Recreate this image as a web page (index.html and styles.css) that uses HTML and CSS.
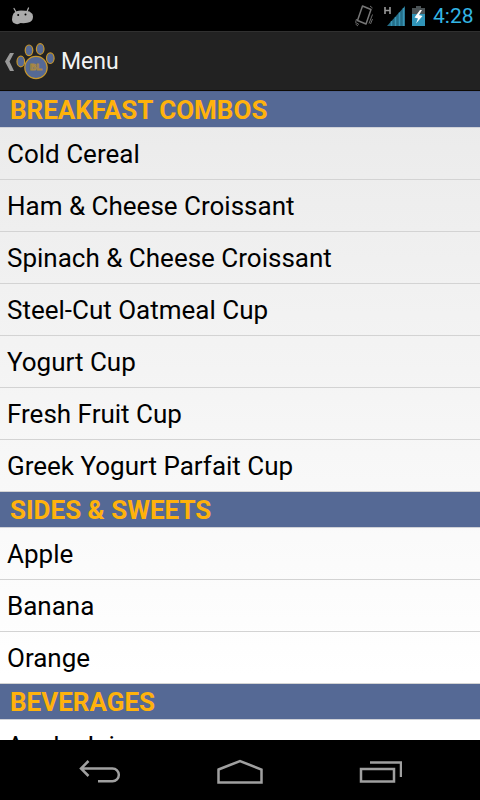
FILE: index.html
```html
<!DOCTYPE html>
<html lang="en">
<head>
<meta charset="utf-8">
<meta name="viewport" content="width=device-width, initial-scale=1">
<title>Menu</title>
<link rel="stylesheet" href="styles.css">
</head>
<body>
<div class="status">
  <svg class="status-bot" width="24" height="18" viewBox="0 0 24 18" aria-hidden="true">
    <path d="M3 1.500 5 5M17.500 1 16 4.500" stroke="#aaa" stroke-width="1.300" stroke-linecap="round"/>
    <path d="M2.500 6.500Q5 3.500 10 3.500T18.500 4.500Q21.500 6 22 9.500Q22 13.500 19 15Q16 16.500 9.500 16Q7.500 17.500 5 17Q1 16 1 12.500Q1 9 2.500 6.500Z" fill="#aaa"/>
    <circle cx="7.200" cy="8" r="1" fill="#000"/><circle cx="14.500" cy="7.500" r="1" fill="#000"/>
  </svg>
  <svg class="status-icons" width="74" height="22" viewBox="0 0 74 22" aria-hidden="true">
    <g fill="none" stroke="#777">
      <path d="M7.500 1 16 4.500 11 19 2.500 15.500Z" stroke-linejoin="round" stroke-width="1.500"/>
      <path d="M1.500 14 .6 17.500 4 19.500M.5 19 3 21M15 1 17.500 3M17.500 9.500 14 18.500M17.500 14 15.500 19" stroke-width=".9"/>
    </g>
    <path d="M30 2V9M35 2V9M30 5.500H35" stroke="#999" stroke-width="1.600" fill="none"/>
    <path d="M32 21 50 1V21Z" fill="#246d87"/>
    <path d="M36.500 16V21M40.500 12V21M44.500 7.500V21M48.500 3V21" stroke="#3994b4" stroke-width="1.500"/>
    <path d="M61 1H66V3H70V9H57V3H61Z" fill="#4b5356"/>
    <path d="M57 9H70V21H57Z" fill="#3094b8"/>
    <path d="M65 5 59.500 12.500 63 13.500 61 18.500 67.500 11 64 10 67 5Z" fill="#fff"/>
  </svg>
  <time class="clock">4:28</time>
</div>
<header class="bar">
  <button class="up" type="button" aria-label="Navigate up">
    <svg width="55" height="42" viewBox="0 0 55 42" aria-hidden="true">
      <path d="M10 12H14L9.500 20.500 14 30H10L5 20.500Z" fill="#999"/>
      <g fill="#556995" stroke="#c9982b" stroke-width="1.200">
        <ellipse cx="20.800" cy="20.500" rx="3.800" ry="5.300"/>
        <ellipse cx="29" cy="9.300" rx="3.800" ry="5.300"/>
        <ellipse cx="40.200" cy="8" rx="3.800" ry="5.300"/>
        <ellipse cx="50.300" cy="17.200" rx="3.800" ry="5.300"/>
        <circle cx="36" cy="26.500" r="11.200"/>
      </g>
      <text class="monogram" x="30" y="29">BL</text>
    </svg>
  </button>
  <h1 class="title">Menu</h1>
</header>
<main class="list">
  <h2 class="section">BREAKFAST COMBOS</h2>
  <ul class="items">
    <li>Cold Cereal</li>
    <li>Ham &amp; Cheese Croissant</li>
    <li>Spinach &amp; Cheese Croissant</li>
    <li>Steel-Cut Oatmeal Cup</li>
    <li>Yogurt Cup</li>
    <li>Fresh Fruit Cup</li>
    <li>Greek Yogurt Parfait Cup</li>
  </ul>
  <h2 class="section">SIDES &amp; SWEETS</h2>
  <ul class="items">
    <li>Apple</li>
    <li>Banana</li>
    <li>Orange</li>
  </ul>
  <h2 class="section">BEVERAGES</h2>
  <ul class="items">
    <li>Apple Juice</li>
  </ul>
</main>
<nav class="nav">
  <button type="button" aria-label="Back">
    <svg width="44" height="24" viewBox="0 0 44 24" aria-hidden="true"><path d="M10.500 1 3 8.500 10.500 16M3 8.500H34.500A6.300 6.300 0 0 1 34.500 21.200H20"/></svg>
  </button>
  <button type="button" aria-label="Home">
    <svg width="48" height="26" viewBox="0 0 48 26" aria-hidden="true"><path d="M2.500 10.500 24 2 45.500 10.500V23.500H2.500Z"/></svg>
  </button>
  <button type="button" aria-label="Recent apps">
    <svg width="44" height="24" viewBox="0 0 44 24" aria-hidden="true"><path d="M3 9H36V21.500H3ZM12 2.500H43V17"/></svg>
  </button>
</nav>
</body>
</html>
```
FILE: styles.css
```css
* {
  box-sizing: border-box;
}

body {
  margin: 0;
  height: 100vh;
  display: flex;
  flex-direction: column;
  background: #000;
  color: #000;
  font-family: Roboto, "Liberation Sans", sans-serif;
}

button {
  margin: 0;
  padding: 0;
  border: 0;
  background: none;
  display: flex;
  align-items: center;
  justify-content: center;
}

.status {
  flex: none;
  height: 31px;
  padding: 0 7px 0 11px;
  display: flex;
  align-items: center;
}

.status-icons {
  margin-left: auto;
}

.clock {
  margin-left: 4px;
  width: 40px;
  color: #33b5e5;
  font-size: 21px;
  line-height: 30px;
  white-space: nowrap;
}

.bar {
  flex: none;
  height: 60px;
  padding-top: 2px;
  display: flex;
  align-items: center;
  gap: 6px;
  background: #222;
  border-top: 1px solid #303030;
  border-bottom: 1px solid #0d0a04;
}

.monogram {
  fill: #556995;
  stroke: #a88843;
  stroke-width: 1px;
  font-size: 9px;
  font-weight: 700;
}

.title {
  margin: 0;
  color: #f3f3f3;
  font-size: 23px;
  font-weight: 400;
  line-height: 32px;
}

.list {
  flex: 1;
  min-height: 0;
  overflow: hidden;
  border-top: 1px solid #4f628f;
  background: linear-gradient(#eaeaea, #fff 90%);
}

.section {
  margin: 0;
  height: 36px;
  padding-left: 10px;
  background: #556995;
  border-bottom: 1px solid #d0d2d8;
  color: #ffb20c;
  font-size: 26px;
  font-weight: 700;
  line-height: 36px;
}

.items {
  margin: 0;
  padding: 0;
  list-style: none;
}

.items li {
  height: 52px;
  padding-left: 7px;
  border-bottom: 1px solid #d3d3d3;
  font-size: 26px;
  line-height: 52px;
}

.nav {
  flex: none;
  height: 60px;
  padding: 0 30px;
  display: flex;
}

.nav button {
  flex: 1;
  padding-top: 3px;
}

.nav svg {
  fill: none;
  stroke: #a0a0a0;
  stroke-width: 2.5px;
}
```
